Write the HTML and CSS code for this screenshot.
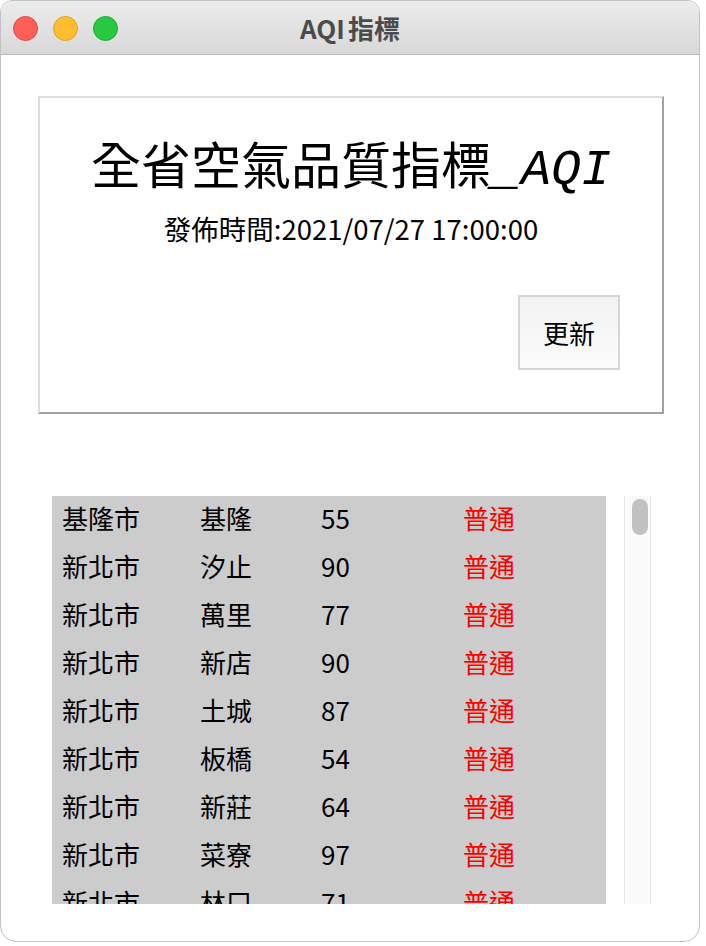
FILE: index.html
```html
<!DOCTYPE html>
<html lang="zh-Hant">
<head>
<meta charset="utf-8">
<title>AQI指標</title>
<link rel="stylesheet" href="styles.css">
</head>
<body>
<div class="window">
  <div class="titlebar">
    <div class="lights">
      <span class="light red"></span>
      <span class="light yellow"></span>
      <span class="light green"></span>
    </div>
    <div class="wtitle"><span class="wlatin">AQI</span>指標</div>
    <div></div>
  </div>
  <div class="content">
    <div class="card">
      <div class="title"><span class="cjk">全省空氣品質指標</span><span class="mono">_AQI</span></div>
      <div class="subtitle">發佈時間:2021/07/27 17:00:00</div>
      <div class="btnrow"><button class="btn">更新</button></div>
    </div>
    <div class="listarea">
      <div class="list">
        <div class="row"><span>基隆市</span><span>基隆</span><span>55</span><span class="status">普通</span></div>
        <div class="row"><span>新北市</span><span>汐止</span><span>90</span><span class="status">普通</span></div>
        <div class="row"><span>新北市</span><span>萬里</span><span>77</span><span class="status">普通</span></div>
        <div class="row"><span>新北市</span><span>新店</span><span>90</span><span class="status">普通</span></div>
        <div class="row"><span>新北市</span><span>土城</span><span>87</span><span class="status">普通</span></div>
        <div class="row"><span>新北市</span><span>板橋</span><span>54</span><span class="status">普通</span></div>
        <div class="row"><span>新北市</span><span>新莊</span><span>64</span><span class="status">普通</span></div>
        <div class="row"><span>新北市</span><span>菜寮</span><span>97</span><span class="status">普通</span></div>
        <div class="row"><span>新北市</span><span>林口</span><span>71</span><span class="status">普通</span></div>
      </div>
      <div class="scrollbar"><div class="thumb"></div></div>
    </div>
  </div>
</div>
</body>
</html>
```

FILE: styles.css
```css
html, body {
  margin: 0;
  padding: 0;
  background: #ffffff;
}

body {
  font-family: "Noto Sans CJK TC", "Noto Sans", sans-serif;
  color: #000;
}

.window {
  width: 700px;
  height: 942px;
  box-sizing: border-box;
  border: 1px solid #c2c2c2;
  border-radius: 12px 12px 16px 16px;
  overflow: hidden;
  background: #ffffff;
}

.titlebar {
  height: 53px;
  border-bottom: 1px solid #bcbcbc;
  background: linear-gradient(#ececec, #d8d8d8);
  display: grid;
  grid-template-columns: 1fr auto 1fr;
  align-items: center;
}

.lights {
  display: flex;
  gap: 15px;
  padding-left: 12px;
  padding-top: 1px;
}

.light {
  width: 23px;
  height: 23px;
  border-radius: 50%;
  border: 1px solid transparent;
}

.light.red { background: #ff5f57; border-color: #e2463f; }
.light.yellow { background: #febc2e; border-color: #dea123; }
.light.green { background: #28c840; border-color: #1aac2c; }

.wtitle {
  font-family: "Noto Sans CJK TC", "Noto Sans", sans-serif;
  font-weight: 700;
  font-size: 26px;
  color: #4b4b4b;
  line-height: 30px;
  padding-top: 1px;
  white-space: nowrap;
}

.wlatin {
  margin-right: 3px;
}

.content {
  padding-top: 41px;
}

.card {
  margin-left: 37px;
  width: 626px;
  height: 318px;
  box-sizing: border-box;
  border-style: solid;
  border-width: 2px;
  border-color: #dedede #a2a2a2 #a2a2a2 #dedede;
  display: flex;
  flex-direction: column;
  align-items: center;
  padding-top: 34px;
}

.title {
  height: 60px;
  line-height: 60px;
  white-space: nowrap;
  display: flex;
  align-items: baseline;
}

.title .cjk {
  font-family: "Noto Sans CJK TC", sans-serif;
  font-size: 50px;
}

.title .mono {
  font-family: "Liberation Mono", monospace;
  font-style: italic;
  font-size: 50px;
}

.subtitle {
  margin-top: 20px;
  height: 32px;
  font-size: 27.5px;
  line-height: 32px;
  white-space: nowrap;
}

.btnrow {
  align-self: stretch;
  display: flex;
  justify-content: flex-end;
  padding-right: 42px;
  margin-top: 51px;
}

.btn {
  width: 102px;
  height: 75px;
  box-sizing: border-box;
  border: 2px solid #d6d6d6;
  background: linear-gradient(#f2f2f2, #fbfbfb);
  font-family: "Noto Sans CJK TC", sans-serif;
  font-size: 26px;
  color: #000;
  padding: 0;
  margin: 0;
}

.listarea {
  margin-top: 82px;
  margin-left: 51px;
  display: flex;
  gap: 18px;
  align-items: flex-start;
}

.list {
  width: 554px;
  height: 408px;
  background: #cccccc;
  overflow: hidden;
}

.row {
  height: 44px;
  padding-bottom: 4px;
  display: grid;
  grid-template-columns: 138px 121px 142px 1fr;
  align-items: center;
  padding-left: 10px;
  font-size: 26px;
  line-height: 44px;
  white-space: nowrap;
}

.status {
  color: #ff0000;
}

.scrollbar {
  width: 27px;
  height: 408px;
  box-sizing: border-box;
  background: #fafafa;
  border-left: 1px solid #e6e6e6;
  border-right: 1px solid #e6e6e6;
  padding: 3px 0 0 7px;
}

.thumb {
  width: 16px;
  height: 36px;
  border-radius: 8px;
  background: #c1c1c1;
}
```
